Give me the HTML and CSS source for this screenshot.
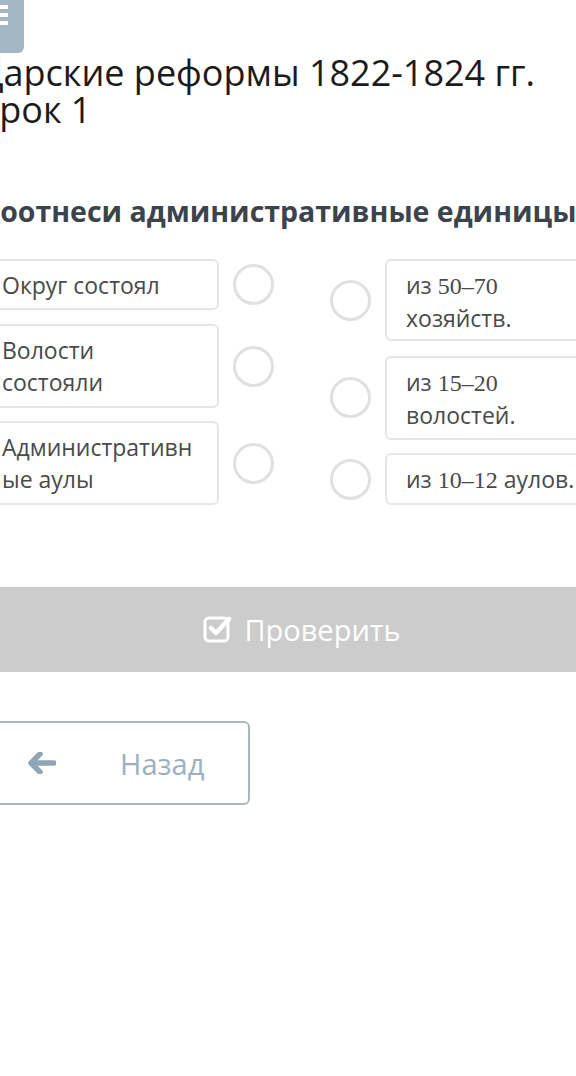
FILE: index.html
```html
<!DOCTYPE html>
<html lang="ru">

<head>
    <meta charset="UTF-8">
    <meta name="viewport" content="width=device-width, initial-scale=1.0">
    <title>Царские реформы 1822-1824 гг.</title>
    <link rel="stylesheet" href="styles.css">
</head>

<body>

    <div class="page">

        <div class="menu">
            <svg width="8" height="26" viewBox="0 0 8 26">
                <rect x="0" y="5" width="8" height="4" fill="#fff" />
                <rect x="0" y="13" width="8" height="4" fill="#fff" />
                <rect x="0" y="21" width="8" height="4" fill="#fff" />
            </svg>
        </div>

        <h1 class="title">Царские реформы 1822-1824 гг.<br>Урок 1</h1>

        <h2 class="task">Соотнеси административные единицы.</h2>

        <div class="match">
            <div class="col col-left">
                <div class="row">
                    <div class="card card-left">Округ состоял</div>
                    <span class="dot"></span>
                </div>
                <div class="row">
                    <div class="card card-left">Волости состояли</div>
                    <span class="dot"></span>
                </div>
                <div class="row">
                    <div class="card card-left">Административные аулы</div>
                    <span class="dot"></span>
                </div>
            </div>

            <div class="col col-right">
                <div class="row">
                    <span class="dot"></span>
                    <div class="card card-right">из <span class="num">50–70</span> хозяйств.</div>
                </div>
                <div class="row">
                    <span class="dot"></span>
                    <div class="card card-right">из <span class="num">15–20</span> волостей.</div>
                </div>
                <div class="row">
                    <span class="dot"></span>
                    <div class="card card-right">из <span class="num">10–12</span> аулов.</div>
                </div>
            </div>
        </div>

        <button class="btn-check">
            <svg width="29" height="29" viewBox="0 0 29 29">
                <rect x="2" y="3" width="23" height="23" rx="4" fill="none" stroke="#fff" stroke-width="3" />
                <path d="M8 13 L13 18 L26 4" fill="none" stroke="#fff" stroke-width="4.5" stroke-linecap="round" stroke-linejoin="round" />
            </svg>
            Проверить
        </button>

        <button class="btn-back">
            <svg class="arrow" width="28" height="22" viewBox="0 0 28 22">
                <path d="M12 2 L3 11 L12 20" fill="none" stroke="#8fa6b6" stroke-width="5.5" stroke-linecap="round" stroke-linejoin="round" />
                <path d="M4 11 L26 11" fill="none" stroke="#8fa6b6" stroke-width="5.5" stroke-linecap="round" />
            </svg>
            <span>Назад</span>
        </button>

    </div>

</body>

</html>
```

FILE: styles.css
```css
body {
    margin: 0;
    overflow: hidden;
    background: #fff;
    font-family: "Open Sans", "Liberation Sans", sans-serif;
}

.page {
    margin-left: -20px;
    width: 644px;
}

.menu {
    margin-top: -10px;
    width: 44px;
    height: 63px;
    background: #a4b7c5;
    border-radius: 0 0 6px 0;
    display: flex;
    align-items: flex-start;
    padding-left: 20px;
    box-sizing: border-box;
    padding-top: 10px;
}

.title {
    margin: 1px 0 0 -3px;
    font-size: 36px;
    font-weight: 400;
    line-height: 37px;
    color: #1b1b1b;
}

.task {
    margin: 65px 0 0 2px;
    font-size: 28.5px;
    font-weight: 700;
    line-height: 36px;
    color: #3d434a;
    white-space: nowrap;
}

.match {
    margin-top: 30px;
    display: flex;
}

.col {
    display: flex;
    flex-direction: column;
}

.col-left {
    gap: 14px;
}

.col-right {
    margin-left: 56px;
    gap: 14px;
}

.row {
    display: flex;
    align-items: center;
}

.card {
    box-sizing: border-box;
    border: 2px solid #e6e6e6;
    border-radius: 6px;
    font-size: 23px;
    line-height: 32px;
    color: #4a4a4a;
    display: flex;
    align-items: center;
}

.card-left {
    width: 239px;
    padding: 0 23px 0 20px;
    overflow-wrap: anywhere;
}

.card-right {
    width: 220px;
    padding: 0 17px 0 19px;
    display: block;
    padding-top: 8px;
}

.num {
    font-family: "Liberation Serif", "DejaVu Serif", serif;
    font-size: 24px;
}

.col-left .row:first-child .card {
    height: 51px;
}

.col-left .row:nth-child(2) .card,
.col-left .row:nth-child(3) .card {
    height: 84px;
}

.col-left .row:nth-child(3) {
    margin-top: -1px;
}

.col-right .row:first-child .card {
    height: 82px;
}

.col-right .row:nth-child(2) .card {
    height: 84px;
    margin-top: 1px;
}

.col-right .row:nth-child(3) .card {
    height: 52px;
    white-space: nowrap;
    padding-top: 8px;
    margin-top: -1px;
}

.dot {
    display: block;
    width: 41px;
    height: 41px;
    box-sizing: border-box;
    border: 3px solid #e0e0e0;
    border-radius: 50%;
    flex-shrink: 0;
}

.col-left .dot {
    margin-left: 14px;
}

.col-right .dot {
    margin-right: 14px;
}

.btn-check {
    margin-top: 82px;
    width: 644px;
    height: 85px;
    border: none;
    border-radius: 7px;
    background: #cccccc;
    color: #fff;
    font-family: "Open Sans", "Liberation Sans", sans-serif;
    font-size: 29px;
    display: flex;
    align-items: center;
    justify-content: center;
    gap: 12px;
    padding: 0;
}

.btn-back {
    margin-top: 49px;
    width: 270px;
    height: 84px;
    border: 2px solid #a8b7c2;
    border-radius: 6px;
    background: #fff;
    color: #9db0be;
    font-family: "Open Sans", "Liberation Sans", sans-serif;
    font-size: 29px;
    display: flex;
    align-items: center;
    padding: 0 0 0 46px;
    box-sizing: border-box;
}

.btn-back span {
    margin-left: 64px;
}
```
